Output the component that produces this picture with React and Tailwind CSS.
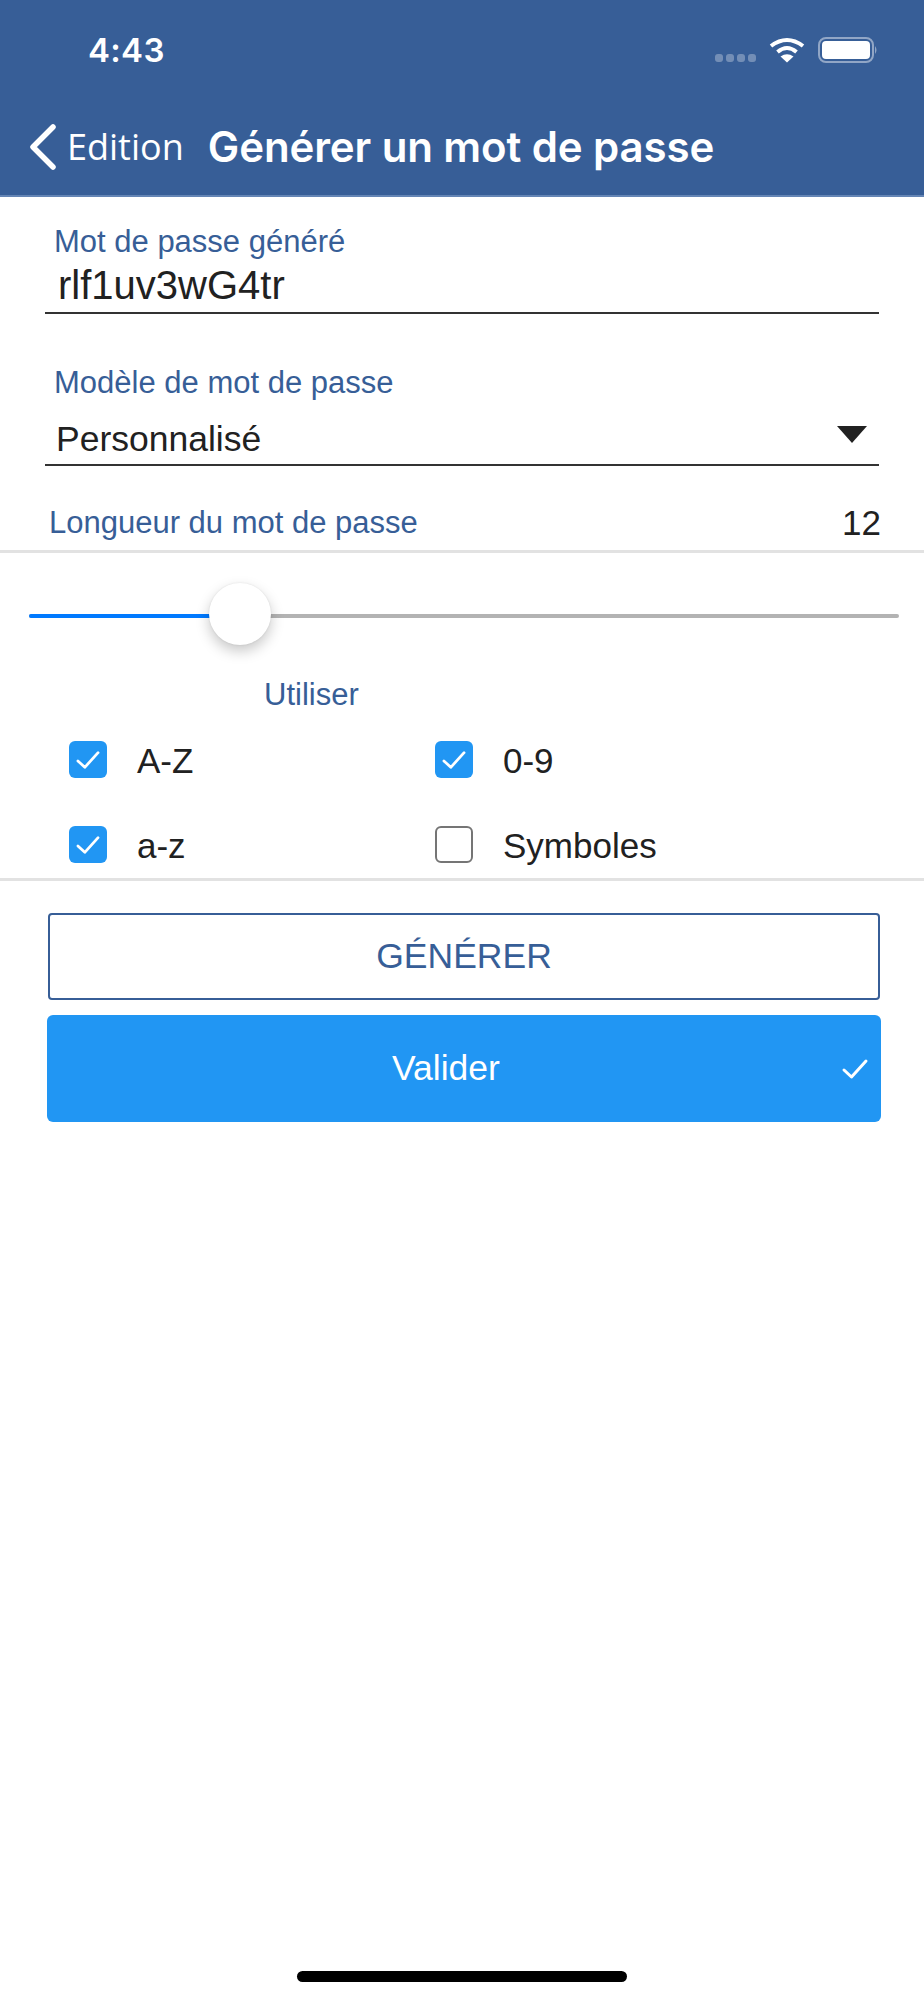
import React from "react";

const Check = ({ className }) => (
  <svg viewBox="0 0 28 24" className={className} fill="none" stroke="white" strokeWidth="3" strokeLinecap="round" strokeLinejoin="round">
    <path d="M3 13 L10.5 20 L25 4" />
  </svg>
);

const Box = ({ checked, label }) => (
  <div className="flex items-center w-[366px]">
    {checked ? (
      <div className="w-[38px] h-[37px] rounded-[6px] bg-[#2196f3] flex items-center justify-center">
        <Check className="w-[26px] h-[22px]" />
      </div>
    ) : (
      <div className="w-[38px] h-[37px] rounded-[6px] border-2 border-[#757575] bg-white" />
    )}
    <span className="ml-[30px] pt-[2px] text-[35px] leading-[37px] text-[#212121]">{label}</span>
  </div>
);

export default function App() {
  return (
    <div className="w-[924px] h-[2000px] bg-white relative overflow-hidden font-['Liberation_Sans',Arial,sans-serif]">
      <header className="h-[197px] bg-[#375e97] border-b-2 border-[#6485b5] text-white">
        <div className="h-[100px] flex items-start pt-[29px] pl-[88px] pr-[46px]">
          <span className="font-['Inter',sans-serif] font-semibold text-[33px] leading-[42px] tracking-[0.3px]">4:43</span>
          <div className="ml-auto flex items-start">
            <div className="flex gap-[3px] mt-[25px]">
              <span className="w-[8px] h-[8px] rounded-[3px] bg-white/30" />
              <span className="w-[8px] h-[8px] rounded-[3px] bg-white/30" />
              <span className="w-[8px] h-[8px] rounded-[3px] bg-white/30" />
              <span className="w-[8px] h-[8px] rounded-[3px] bg-white/30" />
            </div>
            <svg viewBox="0 0 36 26" className="w-[36px] h-[26px] ml-[13px] mt-[8px]" fill="none" stroke="white" strokeWidth="4">
              <path d="M2 9 Q18 -3 34 9" />
              <path d="M8.5 15 Q18 7 27.5 15" />
              <path d="M18 25.5 L11.5 19.5 Q18 15 24.5 19.5 Z" fill="white" stroke="none" />
            </svg>
            <svg viewBox="0 0 60 26" className="w-[60px] h-[26px] ml-[13px] mt-[8px]">
              <rect x="1" y="1" width="54" height="24" rx="7" fill="none" stroke="white" strokeOpacity="0.45" strokeWidth="2" />
              <rect x="4" y="4" width="48" height="18" rx="4" fill="white" />
              <path d="M57 9 Q60 13 57 17 Z" fill="white" fillOpacity="0.45" />
            </svg>
          </div>
        </div>
        <div className="h-[95px] flex items-center pl-[28px] pb-[1px]">
          <svg viewBox="0 0 30 46" className="w-[30px] h-[46px]" fill="none" stroke="white" strokeWidth="5.5" strokeLinecap="round" strokeLinejoin="round">
            <path d="M25 3 L5 23 L25 43" />
          </svg>
          <span className="ml-[9px] font-['Open_Sans',sans-serif] text-[36px] leading-[40px]">Edition</span>
          <span className="ml-[24px] font-['Inter',sans-serif] font-semibold text-[42px] leading-[48px] tracking-[-0.1px]">Générer un mot de passe</span>
        </div>
      </header>

      <section className="pl-[45px] pr-[45px]">
        <div className="pl-[9px] mt-[29px] text-[31px] leading-[32px] text-[#375e97]">Mot de passe généré</div>
        <div className="h-[56px] pl-[13px] pt-[4px] border-b-2 border-[#333333] text-[40px] leading-[46px] text-[#212121]">rlf1uv3wG4tr</div>

        <div className="pl-[9px] mt-[53px] text-[31px] leading-[32px] text-[#375e97]">Modèle de mot de passe</div>
        <div className="h-[60px] mt-[7px] pl-[11px] pr-[12px] pt-[11px] border-b-2 border-[#333333] flex items-start justify-between">
          <span className="text-[35.5px] leading-[44px] text-[#212121]">Personnalisé</span>
          <span className="mt-[9px] w-0 h-0 border-l-[15px] border-r-[15px] border-t-[17px] border-l-transparent border-r-transparent border-t-[#212121]" />
        </div>
      </section>

      <section className="pl-[49px] pr-[43px] h-[84px] flex items-start justify-between pt-[41px]">
        <span className="text-[31px] leading-[32px] text-[#375e97]">Longueur du mot de passe</span>
        <span className="text-[35px] leading-[32px] text-[#212121]">12</span>
      </section>
      <div className="h-[3px] bg-[#e2e2e2]" />

      <section className="relative h-[64px] ml-[29px] mr-[25px]">
        <div className="absolute left-0 right-0 top-[61px] h-[4px] rounded-full bg-[#b3b3b3]" />
        <div className="absolute left-0 w-[181px] top-[61px] h-[4px] rounded-l-full bg-[#007aff]" />
        <div className="absolute left-[180px] top-[30px] w-[62px] h-[62px] rounded-full bg-white shadow-[0_6px_14px_rgba(0,0,0,0.22),0_0_2px_rgba(0,0,0,0.1)]" />
      </section>

      <section className="mt-[62px]">
        <div className="pl-[264px] text-[31px] leading-[32px] text-[#375e97]">Utiliser</div>
        <div className="mt-[29px] pl-[69px] flex">
          <Box checked label="A-Z" />
          <Box checked label="0-9" />
        </div>
        <div className="mt-[46px] pl-[69px] flex">
          <Box checked label="a-z" />
          <Box label="Symboles" />
        </div>
      </section>
      <div className="h-[3px] bg-[#e2e2e2] mt-[14px]" />

      <section className="pl-[48px] pr-[44px] mt-[32px]">
        <div className="h-[87px] rounded-[4px] border-2 border-[#375e97] flex items-center justify-center text-[35.5px] text-[#375e97]">GÉNÉRER</div>
        <div className="relative -ml-[1px] -mr-[1px] mt-[15px] h-[107px] rounded-[6px] bg-[#2196f3] flex items-center justify-center pr-[36px] text-[35.5px] text-white">
          Valider
          <Check className="absolute right-[12px] top-[42px] w-[28px] h-[24px]" />
        </div>
      </section>

      <div className="absolute left-[297px] top-[1971px] w-[330px] h-[11px] rounded-full bg-black" />
    </div>
  );
}
